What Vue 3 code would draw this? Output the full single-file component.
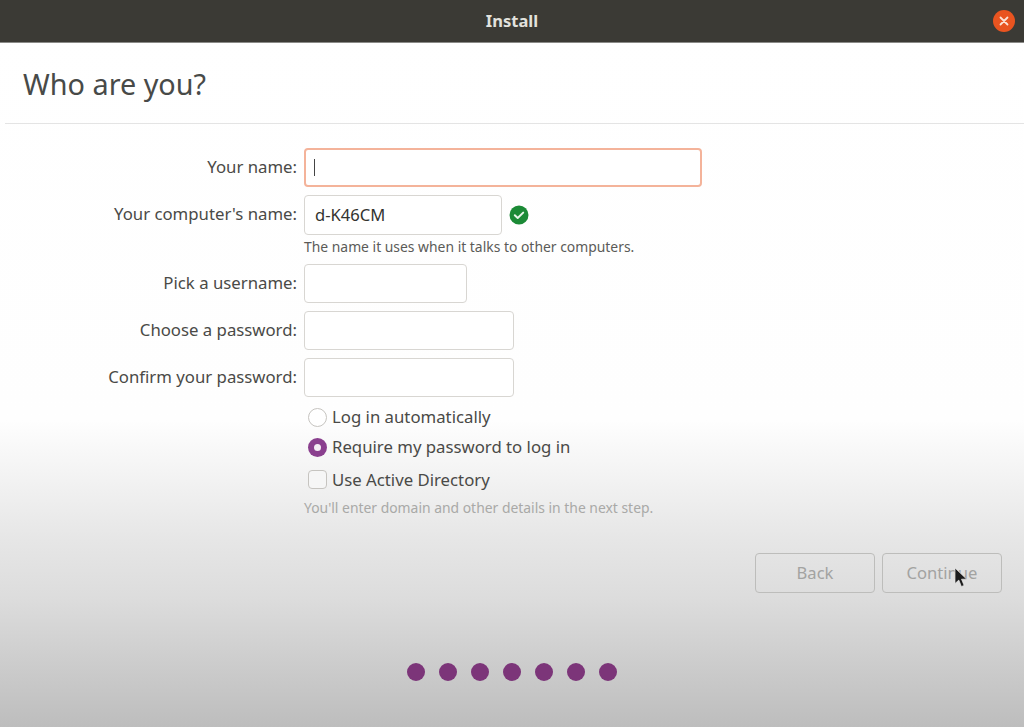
<script setup>
const dots = [1, 2, 3, 4, 5, 6, 7]
</script>

<template>
  <div class="window">
    <header class="titlebar">
      <span class="title">Install</span>
      <button class="close" type="button" aria-label="Close">
        <svg width="10" height="10" viewBox="0 0 10 10">
          <path d="M1.5 1.5l7 7M8.5 1.5l-7 7" stroke="#fbe3d6" stroke-width="1.8" stroke-linecap="round" />
        </svg>
      </button>
    </header>

    <div class="heading">
      <h1>Who are you?</h1>
    </div>

    <form class="form" @submit.prevent>
      <label class="label">Your name:</label>
      <div class="field-row">
        <div class="input focused"><span class="caret"></span></div>
      </div>

      <label class="label computer">Your computer's name:</label>
      <div class="field-row computer">
        <div class="input host">d-K46CM</div>
        <svg class="check" width="20" height="20" viewBox="0 0 20 20">
          <circle cx="10" cy="10" r="9.5" fill="#1b8a36" />
          <path d="M5.8 10.3l2.9 2.7 5.5-5.4" fill="none" stroke="#e6f4e8" stroke-width="2" stroke-linecap="round" stroke-linejoin="round" />
        </svg>
      </div>

      <p class="hint dark">The name it uses when it talks to other computers.</p>

      <label class="label">Pick a username:</label>
      <div class="field-row">
        <div class="input user"></div>
      </div>

      <label class="label">Choose a password:</label>
      <div class="field-row">
        <div class="input pass"></div>
      </div>

      <label class="label">Confirm your password:</label>
      <div class="field-row">
        <div class="input pass"></div>
      </div>

      <div class="options">
        <div class="option">
          <span class="radio"></span>
          <span class="option-text">Log in automatically</span>
        </div>
        <div class="option">
          <span class="radio on"></span>
          <span class="option-text">Require my password to log in</span>
        </div>
        <div class="option ad">
          <span class="box"></span>
          <span>Use Active Directory</span>
        </div>
        <p class="hint faded">You'll enter domain and other details in the next step.</p>
      </div>
    </form>

    <div class="actions">
      <button class="btn" type="button" disabled>Back</button>
      <button class="btn" type="button" disabled>Continue</button>
      <svg class="pointer" width="14" height="21" viewBox="0 0 14 21">
        <path d="M1 1v15.5l3.8-3.4 2.6 6.4 2.7-1.1-2.6-6.2h5.2z" fill="#1c1c1c" stroke="#e8e8e8" stroke-width="0.7" />
      </svg>
    </div>

    <div class="dots">
      <span v-for="d in dots" :key="d" class="dot"></span>
    </div>
  </div>
</template>

<style scoped>
.window {
  width: 1024px;
  height: 727px;
  overflow: hidden;
  font-family: "Noto Sans", "Open Sans", sans-serif;
  color: #4a4a47;
  background: linear-gradient(to bottom, #ffffff 0, #fefefe 420px, #e6e6e6 540px, #dcdcdc 600px, #bdbdbd 727px);
}

.titlebar {
  height: 43px;
  background: #3b3a35;
  border-bottom: 1px solid #8b8b88;
  box-sizing: border-box;
  display: flex;
  align-items: center;
  justify-content: center;
  position: relative;
}

.title {
  color: #e2e2de;
  font-size: 16.5px;
  font-weight: 700;
  padding-bottom: 2px;
}

.close {
  position: absolute;
  right: 9px;
  top: 10px;
  width: 22px;
  height: 22px;
  padding: 0;
  border: 0;
  border-radius: 50%;
  background: #e95420;
  display: flex;
  align-items: center;
  justify-content: center;
}

.heading {
  margin-left: 5px;
  height: 81px;
  box-sizing: border-box;
  border-bottom: 1px solid #e4e4e4;
  padding-left: 18px;
  padding-top: 2px;
  display: flex;
  align-items: center;
}

h1 {
  margin: 0;
  font-size: 28.8px;
  font-weight: 400;
  color: #484a48;
  line-height: 40px;
}

.form {
  display: grid;
  grid-template-columns: 297px 1fr;
  column-gap: 7px;
  row-gap: 8px;
  padding-top: 24px;
  font-size: 16.75px;
}

.label {
  text-align: right;
  line-height: 37px;
  height: 39px;
  white-space: nowrap;
}

.label.computer {
  line-height: 38px;
  height: 40px;
}

.field-row {
  display: flex;
  align-items: center;
  gap: 7px;
}

.input {
  box-sizing: border-box;
  height: 39px;
  background: #fff;
  border: 1px solid #d8d6d2;
  border-radius: 4px;
  padding-left: 10px;
  display: flex;
  align-items: center;
  font-size: 16.6px;
  color: #33332f;
}

.input.focused {
  width: 398px;
  border: 2px solid #f4b39a;
  padding-left: 8px;
}

.caret {
  width: 1px;
  height: 17px;
  background: #444;
}

.input.host {
  width: 198px;
  height: 40px;
  padding-bottom: 2px;
}

.input.user {
  width: 163px;
}

.input.pass {
  width: 210px;
}

.check {
  flex: none;
}

.hint {
  grid-column: 2;
  margin: 0;
  font-size: 13.9px;
  line-height: 18px;
  white-space: nowrap;
}

.hint.dark {
  color: #5b5b58;
  margin-top: -5px;
  margin-bottom: -2px;
  height: 20px;
}

.options {
  grid-column: 2;
  margin-top: -3px;
}

.option {
  display: flex;
  align-items: center;
  gap: 5px;
  height: 30px;
  padding-left: 4px;
}

.option.ad {
  height: 35px;
}

.option-text {
  padding-bottom: 2px;
}

.radio,
.box {
  box-sizing: border-box;
  width: 19px;
  height: 19px;
  background: #fff;
  border: 1px solid #c6c4c0;
  flex: none;
}

.radio {
  border-radius: 50%;
}

.radio.on {
  background: #8a3f8e;
  border: 0;
  display: flex;
  align-items: center;
  justify-content: center;
}

.radio.on::after {
  content: "";
  width: 7px;
  height: 7px;
  border-radius: 50%;
  background: #f4ecf4;
}

.box {
  border-radius: 4px;
  background: #f6f6f6;
}

.hint.faded {
  color: #a9a9a7;
  padding-top: 2px;
}

.actions {
  display: flex;
  justify-content: flex-end;
  gap: 7px;
  padding-right: 22px;
  margin-top: 36px;
  position: relative;
}

.btn {
  box-sizing: border-box;
  width: 120px;
  height: 40px;
  background: transparent;
  border: 1px solid #bdbdbb;
  border-radius: 4px;
  font-family: inherit;
  font-size: 16.6px;
  color: #a3a3a1;
  padding: 0 0 2px;
}

.pointer {
  position: absolute;
  left: 954px;
  top: 14px;
}

.dots {
  display: flex;
  justify-content: center;
  gap: 14px;
  margin-top: 70px;
}

.dot {
  width: 18px;
  height: 18px;
  border-radius: 50%;
  background: #7c3579;
}
</style>

<style>
html, body {
  margin: 0;
  background: #fff;
}
</style>
